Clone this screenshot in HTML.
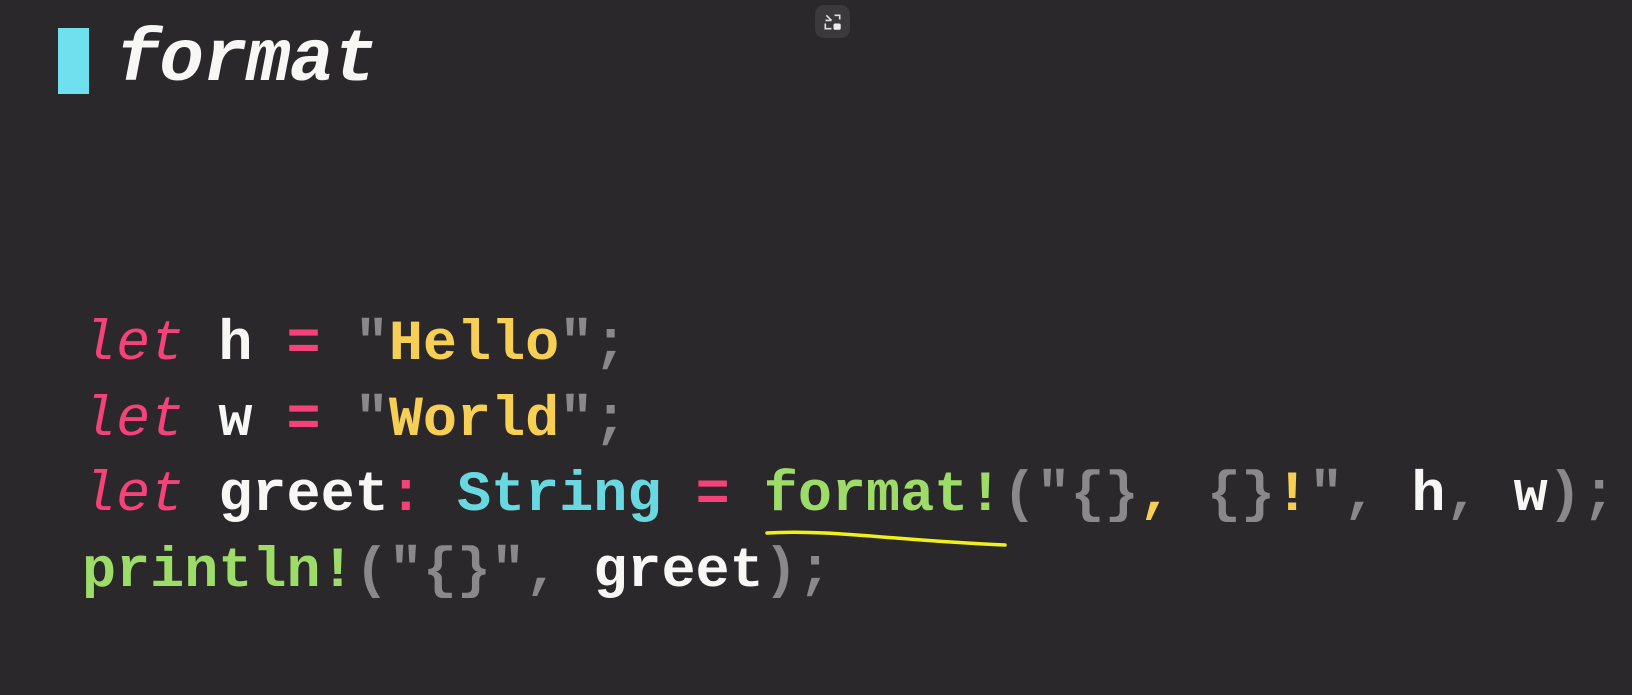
<!DOCTYPE html>
<html><head><meta charset="utf-8"><style>
html,body{margin:0;padding:0;background:#2a282b;width:1632px;height:695px;overflow:hidden;position:relative}
.bar{position:absolute;left:58px;top:28px;width:31px;height:66px;background:#6fe1ee}
.title{position:absolute;left:116px;top:24px;font:italic bold 74px/1 "Liberation Mono",monospace;color:#f7f7f5;letter-spacing:-1px}
.icon{position:absolute;left:815px;top:5px;width:35px;height:33px;border-radius:9px;background:#3b393c}
pre{position:absolute;left:82px;top:308px;margin:0;font:bold 56.8px/75.5px "Liberation Mono",monospace;color:#f7f7f5}
.k{color:#f5427a;font-style:italic;font-weight:normal}.o{color:#f5427a}.s{color:#f7cf55}.g{color:#8a888a}.t{color:#6ad8e0}.m{color:#9edc69}
</style></head><body>
<div class="bar"></div><div class="title">format</div>
<div class="icon"><svg width="35" height="33" viewBox="0 0 34 32"><path d="M11 10l5 5M11 14v1h5M19 10h5v4M10 18v5h6" stroke="#ddd" stroke-width="1.6" fill="none"/><rect x="18" y="18" width="7" height="6" rx="1.5" fill="#eee"/></svg></div>
<pre><span class="k">let</span> h <span class="o">=</span> <span class="g">"</span><span class="s">Hello</span><span class="g">";</span>
<span class="k">let</span> w <span class="o">=</span> <span class="g">"</span><span class="s">World</span><span class="g">";</span>
<span class="k">let</span> greet<span class="o">:</span> <span class="t">String</span> <span class="o">=</span> <span class="m">format!</span><span class="g">("{}</span><span class="s">,</span> <span class="g">{}</span><span class="s">!</span><span class="g">",</span> h<span class="g">,</span> w<span class="g">);</span>
<span class="m">println!</span><span class="g">("{}",</span> greet<span class="g">);</span></pre>
<svg style="position:absolute;left:0;top:0" width="1632" height="695"><path d="M767 533 C830 529 900 541 1005 545" stroke="#f2f01a" stroke-width="3.5" fill="none" stroke-linecap="round"/></svg>
</body></html>
